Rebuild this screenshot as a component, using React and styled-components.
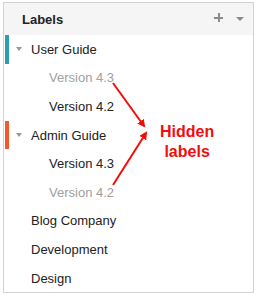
import styled, { createGlobalStyle } from "styled-components";

const GlobalStyle = createGlobalStyle`
  body {
    margin: 0;
    font-family: "Liberation Sans", Arial, sans-serif;
    background: #ffffff;
  }
`;

const labels = [
  { name: "User Guide", level: 0, marker: "#2a9fb3", toggle: true },
  { name: "Version 4.3", level: 1, hidden: true },
  { name: "Version 4.2", level: 1 },
  { name: "Admin Guide", level: 0, marker: "#f25a2c", toggle: true },
  { name: "Version 4.3", level: 1 },
  { name: "Version 4.2", level: 1, hidden: true },
  { name: "Blog Company", level: 0 },
  { name: "Development", level: 0 },
  { name: "Design", level: 0 },
];

const App = () => (
  <>
    <GlobalStyle />
    <Panel>
      <Header>
        <Title>Labels</Title>
        <Actions>
          <Plus />
          <Caret $color="#8a8a8a" $size={4} />
        </Actions>
      </Header>
      <List>
        {labels.map((label, i) => (
          <Row key={i}>
            <Marker $color={label.marker} />
            <Toggle>{label.toggle && <Caret $color="#999999" $size={3.5} />}</Toggle>
            <Name $level={label.level} $hidden={label.hidden}>
              {label.name}
            </Name>
          </Row>
        ))}
      </List>
      <Annotation>
        <svg width="60" height="120" viewBox="0 0 60 120">
          <defs>
            <marker
              id="head"
              markerWidth="8"
              markerHeight="8"
              refX="6"
              refY="4"
              orient="auto"
              markerUnits="userSpaceOnUse"
            >
              <path d="M0,0 L8,4 L0,8 Z" fill="#f20d0d" />
            </marker>
          </defs>
          <line x1="2" y1="2" x2="33" y2="45" stroke="#f20d0d" strokeWidth="2" markerEnd="url(#head)" />
          <line x1="2" y1="104" x2="35" y2="52" stroke="#f20d0d" strokeWidth="2" markerEnd="url(#head)" />
        </svg>
        <Note>
          Hidden
          <br />
          labels
        </Note>
      </Annotation>
    </Panel>
  </>
);

const Panel = styled.div`
  position: relative;
  box-sizing: border-box;
  width: 251px;
  margin: 2px 0 0 3px;
  border: 1px solid #d2d2d2;
  background: #ffffff;
`;

const Header = styled.div`
  display: flex;
  align-items: center;
  justify-content: space-between;
  height: 32px;
  padding: 0 9px 0 18px;
  background: #f5f5f5;
`;

const Title = styled.div`
  font-size: 13px;
  font-weight: bold;
  color: #222222;
`;

const Actions = styled.div`
  display: flex;
  align-items: center;
  gap: 13px;
`;

const Plus = styled.span`
  position: relative;
  width: 9px;
  height: 9px;
  margin-top: -4px;

  &::before,
  &::after {
    content: "";
    position: absolute;
    background: #8a8a8a;
  }
  &::before {
    left: 0;
    right: 0;
    top: 4px;
    height: 2px;
  }
  &::after {
    top: 0;
    bottom: 0;
    left: 4px;
    width: 2px;
  }
`;

const Caret = styled.span`
  width: 0;
  height: 0;
  border-left: ${({ $size }) => $size}px solid transparent;
  border-right: ${({ $size }) => $size}px solid transparent;
  border-top: 4px solid ${({ $color }) => $color};
`;

const List = styled.div`
  display: flex;
  flex-direction: column;
`;

const Row = styled.div`
  display: flex;
  align-items: center;
  height: 28.6px;
`;

const Marker = styled.div`
  align-self: stretch;
  width: 4px;
  margin-left: 1px;
  background: ${({ $color }) => $color || "transparent"};
`;

const Toggle = styled.div`
  display: flex;
  align-items: center;
  width: 22px;
  padding-left: 7px;
  box-sizing: border-box;
`;

const Name = styled.div`
  padding-left: ${({ $level }) => $level * 18}px;
  font-size: 13px;
  color: ${({ $hidden }) => ($hidden ? "#a0a0a0" : "#222222")};
`;

const Annotation = styled.div`
  position: absolute;
  left: 107px;
  top: 78px;
  display: flex;
  align-items: center;
`;

const Note = styled.div`
  margin-left: -11px;
  margin-top: 2px;
  font-size: 16px;
  font-weight: bold;
  line-height: 20px;
  text-align: center;
  color: #f20d0d;
`;

export default App;
